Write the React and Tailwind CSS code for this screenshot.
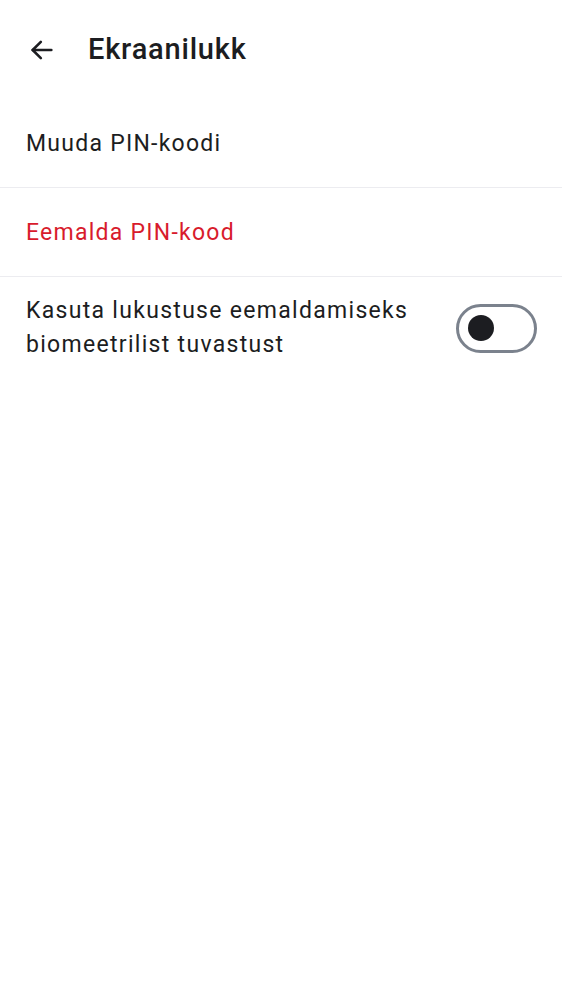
export default function App() {
  return (
    <div className="min-h-screen bg-white text-[#1c1d21]" style={{ fontFamily: 'Roboto, sans-serif' }}>
      <div className="flex items-center h-[100px] px-[28px]">
        <svg width="28" height="28" viewBox="0 0 24 24" fill="none" stroke="#1c1d21" strokeWidth="2.2" strokeLinecap="round" strokeLinejoin="round">
          <path d="M20 12H4" />
          <path d="M11 5l-7 7 7 7" />
        </svg>
        <h1 className="ml-[32px] text-[29px] font-medium tracking-[0.8px]">Ekraanilukk</h1>
      </div>
      <div className="flex items-center h-[88px] px-[26px] pt-[2px] border-b border-[#ececf0] text-[23px] tracking-[1.25px]">
        Muuda PIN-koodi
      </div>
      <div className="flex items-center h-[89px] px-[26px] pt-[2px] border-b border-[#ececf0] text-[23px] tracking-[1.25px] text-[#d81b2c]">
        Eemalda PIN-kood
      </div>
      <div className="flex items-center justify-between pl-[26px] pr-[25px] pt-[17px] pb-[14px]">
        <div className="text-[23px] leading-[34px] tracking-[1.3px]">
          Kasuta lukustuse eemaldamiseks
          <br />
          biomeetrilist tuvastust
        </div>
        <div className="w-[81px] h-[49px] rounded-full border-[3px] border-[#7b828d] flex items-center pl-[9px] shrink-0">
          <div className="w-[26px] h-[26px] rounded-full bg-[#1c1d21]" />
        </div>
      </div>
    </div>
  )
}
